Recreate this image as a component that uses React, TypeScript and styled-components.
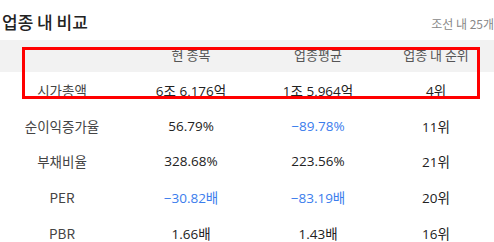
import React from "react";
import styled, { createGlobalStyle } from "styled-components";

const Global = createGlobalStyle`
  html, body { margin: 0; padding: 0; background: #fff; }
  body {
    width: 494px;
    height: 242px;
    overflow: hidden;
    font-family: "Noto Sans CJK KR", "Noto Sans", sans-serif;
    color: #222;
  }
`;

const Page = styled.div`
  width: 494px;
  overflow: hidden;
`;

const TitleBar = styled.div`
  display: flex;
  justify-content: space-between;
  align-items: flex-end;
  height: 40px;
  padding-left: 2px;
  box-sizing: border-box;
`;

const Title = styled.h2`
  margin: 0 0 6px;
  font-size: 17px;
  font-weight: 500;
  line-height: 24px;
  color: #222;
`;

const Caption = styled.span`
  margin-bottom: 7px;
  font-size: 12px;
  line-height: 18px;
  color: #888;
  white-space: nowrap;
`;

const TableWrap = styled.div`
  position: relative;
`;

const Grid = styled.div`
  display: grid;
  grid-template-columns: 124px 134px 120px 116px;
  grid-template-rows: 32px repeat(5, 35.75px);
`;

const HeadCell = styled.div`
  background: #f2f2f2;
  display: flex;
  align-items: center;
  justify-content: center;
  font-size: 13px;
  color: #555;
  padding-bottom: 3px;
  box-sizing: border-box;
`;

const Cell = styled.div<{ $tone?: "label" | "neg" }>`
  display: flex;
  align-items: center;
  justify-content: center;
  font-family: ${(p) =>
    p.$tone === "label"
      ? `"Noto Sans CJK KR", sans-serif`
      : `"Open Sans", "Noto Sans CJK KR", sans-serif`};
  font-size: 13.5px;
  white-space: nowrap;
  color: ${(p) => (p.$tone === "neg" ? "#3b7ded" : p.$tone === "label" ? "#444" : "#222")};
`;

const Highlight = styled.div`
  position: absolute;
  left: 22px;
  top: 7px;
  width: 458px;
  height: 52px;
  border: 3px solid #ff0000;
  box-sizing: border-box;
  pointer-events: none;
`;

type Row = { label: string; cur: string; avg: string; rank: string };

const rows: Row[] = [
  { label: "시가총액", cur: "6조 6,176억", avg: "1조 5,964억", rank: "4위" },
  { label: "순이익증가율", cur: "56.79%", avg: "-89.78%", rank: "11위" },
  { label: "부채비율", cur: "328.68%", avg: "223.56%", rank: "21위" },
  { label: "PER", cur: "-30.82배", avg: "-83.19배", rank: "20위" },
  { label: "PBR", cur: "1.66배", avg: "1.43배", rank: "16위" },
];

const tone = (v: string) => (v.startsWith("-") ? "neg" : undefined);

export default function App() {
  return (
    <Page>
      <Global />
      <TitleBar>
        <Title>업종 내 비교</Title>
        <Caption>조선 내 25개</Caption>
      </TitleBar>
      <TableWrap>
        <Grid>
          <HeadCell />
          <HeadCell>현 종목</HeadCell>
          <HeadCell>업종평균</HeadCell>
          <HeadCell>업종 내 순위</HeadCell>
          {rows.map((r) => (
            <React.Fragment key={r.label}>
              <Cell $tone="label">{r.label}</Cell>
              <Cell $tone={tone(r.cur)}>{r.cur.replace(/^-/, "\u2212")}</Cell>
              <Cell $tone={tone(r.avg)}>{r.avg.replace(/^-/, "\u2212")}</Cell>
              <Cell>{r.rank}</Cell>
            </React.Fragment>
          ))}
        </Grid>
        <Highlight />
      </TableWrap>
    </Page>
  );
}
